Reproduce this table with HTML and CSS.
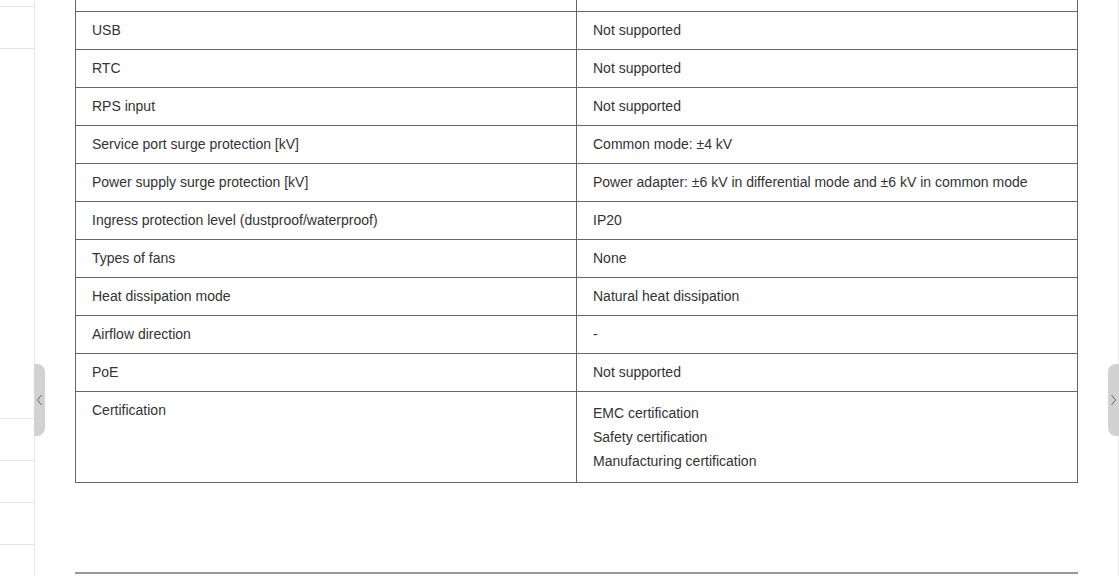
FILE: index.html
```html
<!DOCTYPE html>
<html lang="en">
<head>
<meta charset="utf-8">
<title>Specifications</title>
<link rel="stylesheet" href="styles.css">
</head>
<body>
<div class="page">
  <aside class="sidebar">
    <div class="side-item side-first"></div>
    <div class="side-item"></div>
    <div class="side-item side-tall"></div>
    <div class="side-item"></div>
    <div class="side-item"></div>
    <div class="side-item"></div>
    <div class="side-item"></div>
  </aside>
  <main class="main">
    <table class="spec">
      <tbody>
        <tr><td>&nbsp;</td><td>&nbsp;</td></tr>
        <tr><td>USB</td><td>Not supported</td></tr>
        <tr><td>RTC</td><td>Not supported</td></tr>
        <tr><td>RPS input</td><td>Not supported</td></tr>
        <tr><td>Service port surge protection [kV]</td><td>Common mode: ±4 kV</td></tr>
        <tr><td>Power supply surge protection [kV]</td><td>Power adapter: ±6 kV in differential mode and ±6 kV in common mode</td></tr>
        <tr><td>Ingress protection level (dustproof/waterproof)</td><td>IP20</td></tr>
        <tr><td>Types of fans</td><td>None</td></tr>
        <tr><td>Heat dissipation mode</td><td>Natural heat dissipation</td></tr>
        <tr><td>Airflow direction</td><td>-</td></tr>
        <tr><td>PoE</td><td>Not supported</td></tr>
        <tr>
          <td>Certification</td>
          <td>
            <div class="lines">
              <div>EMC certification</div>
              <div>Safety certification</div>
              <div>Manufacturing certification</div>
            </div>
          </td>
        </tr>
      </tbody>
    </table>
    <hr class="divider">
  </main>
  <div class="tab tab-left">
    <svg width="11" height="72" viewBox="0 0 11 72"><polyline points="7.5,31 3.5,36 7.5,41" fill="none" stroke="#666" stroke-width="1"/></svg>
  </div>
  <div class="tab tab-right">
    <svg width="11" height="72" viewBox="0 0 11 72"><polyline points="3.5,31 7.5,36 3.5,41" fill="none" stroke="#666" stroke-width="1"/></svg>
  </div>
</div>
</body>
</html>
```
FILE: styles.css
```css
html, body {
  margin: 0;
  padding: 0;
  background: #fff;
  height: 100%;
  overflow: hidden;
}
body {
  font-family: "Liberation Sans", Arial, sans-serif;
  font-size: 14px;
  color: #333;
}
.page {
  position: relative;
  display: flex;
  height: 576px;
  overflow: hidden;
}
.sidebar {
  width: 34px;
  flex: 0 0 34px;
  border-right: 1px solid #e6e6e6;
  display: flex;
  flex-direction: column;
  overflow: hidden;
}
.side-item {
  flex: 0 0 42px;
  height: 42px;
  box-sizing: border-box;
  border-bottom: 1px solid #e6e6e6;
}
.side-first {
  margin-top: -35px;
}
.side-tall {
  flex: 0 0 370px;
  height: 370px;
}
.main {
  flex: 1;
  padding: 0 40px;
  border-right: 1px solid #ececec;
  min-width: 0;
}
.spec {
  width: 100%;
  margin-top: -27px;
  border-collapse: collapse;
  table-layout: fixed;
}
.spec td {
  width: 50%;
  border: 1px solid #666;
  padding: 6px 16px 7px;
  line-height: 24px;
  vertical-align: top;
  text-align: left;
}
.lines {
  padding: 3px 0 2px;
}
.divider {
  margin: 89px 0 0;
  border: 0;
  height: 2px;
  background: #999;
}
.tab {
  position: absolute;
  top: 364px;
  width: 11px;
  height: 72px;
  background: #d2d2d2;
}
.tab svg {
  display: block;
}
.tab-left {
  left: 34px;
  border-radius: 0 8px 8px 0;
}
.tab-right {
  right: 0;
  border-radius: 8px 0 0 8px;
}
```
